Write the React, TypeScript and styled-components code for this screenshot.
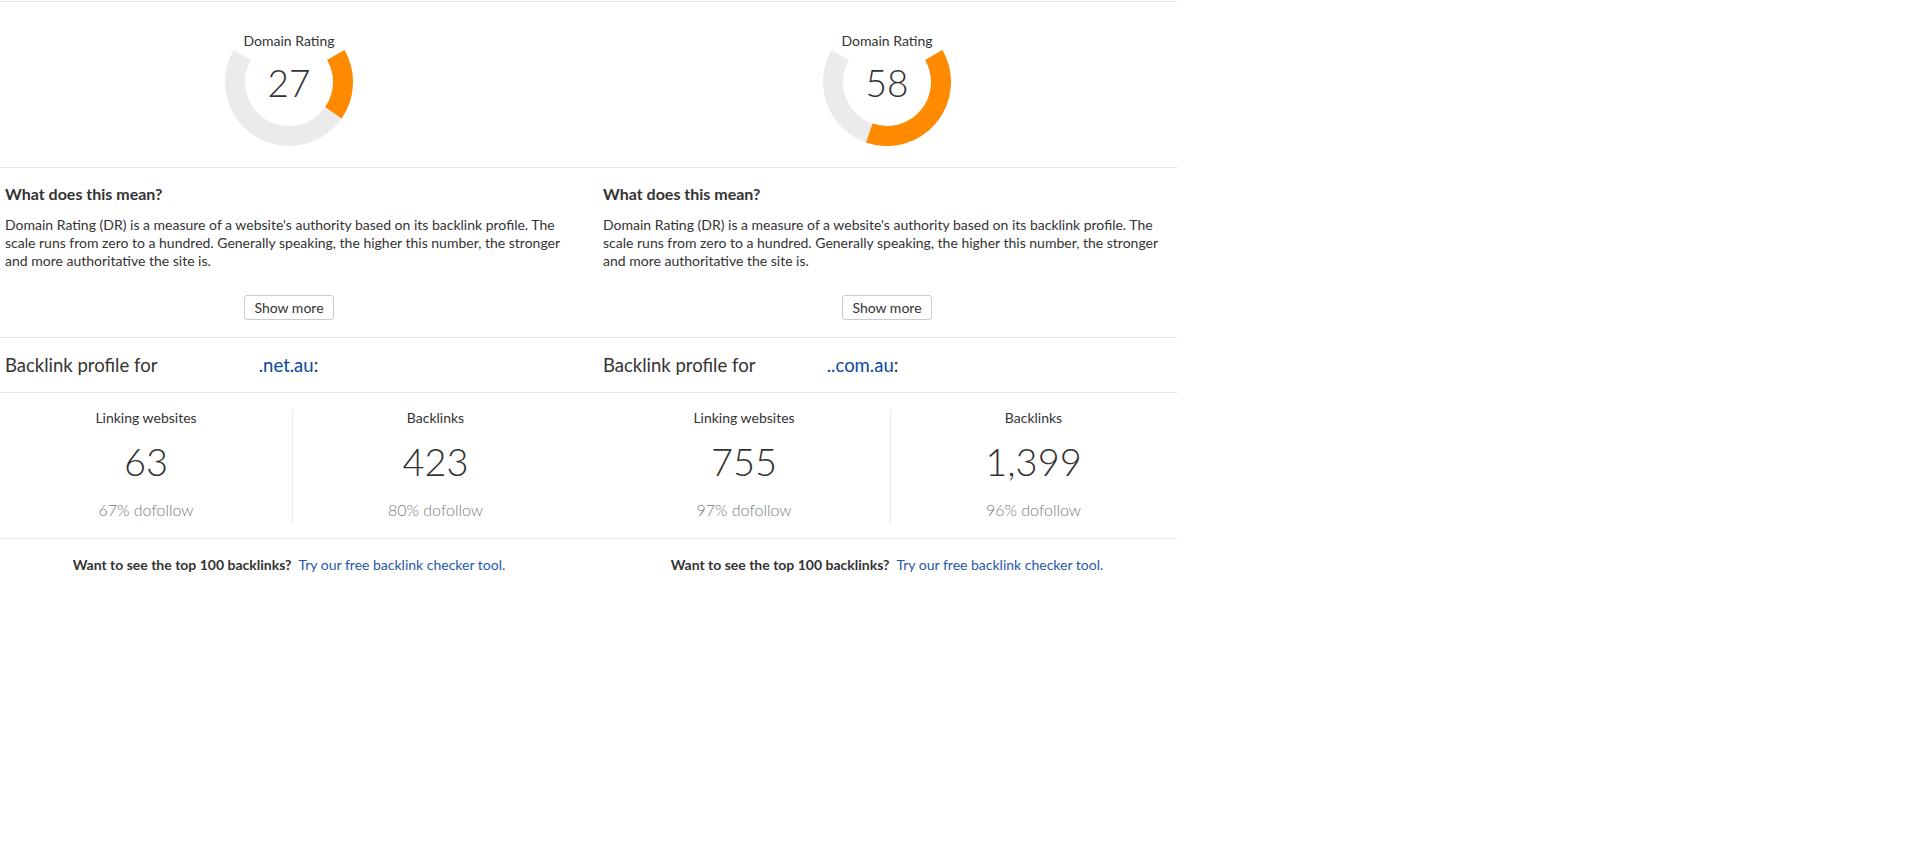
import React from 'react';
import styled, { createGlobalStyle } from 'styled-components';

const GlobalStyle = createGlobalStyle`
  body {
    margin: 0;
    background: #ffffff;
    font-family: Lato, "Open Sans", Arial, sans-serif;
    color: #333333;
  }
`;

const lineColor = '#e8e8e8';
const orange = '#ff8a00';
const track = '#ebebed';

const Page = styled.div`
  width: 1177px;
  border-top: 1px solid ${lineColor};
  margin-top: 1px;
`;

const Row = styled.div<{ $last?: boolean }>`
  display: grid;
  grid-template-columns: 578px 578px;
  column-gap: 20px;
  border-bottom: ${({ $last }) => ($last ? 'none' : `1px solid ${lineColor}`)};
`;

const GaugeCell = styled.div`
  display: flex;
  flex-direction: column;
  align-items: center;
  padding: 31px 0 21px;
`;

const GaugeLabel = styled.div`
  font-size: 14px;
  line-height: 16px;
  color: #333;
`;

const GaugeWrap = styled.div`
  position: relative;
  width: 128px;
  height: 128px;
  margin-top: -31px;
`;

const GaugeValue = styled.div`
  position: absolute;
  inset: 0;
  display: flex;
  align-items: center;
  justify-content: center;
  font-size: 37px;
  font-weight: 300;
  color: #333;
  padding-top: 1px;
`;

const ExplainCell = styled.div`
  display: flex;
  flex-direction: column;
  padding: 17px 5px 17px;
`;

const Heading = styled.div`
  font-size: 16px;
  line-height: 18px;
  font-weight: 700;
  color: #333;
`;

const Body = styled.p`
  margin: 13px 0 0;
  font-size: 14px;
  line-height: 18px;
  color: #333;
`;

const ShowMore = styled.button`
  align-self: center;
  margin-top: 25px;
  height: 25px;
  padding: 0 9px;
  background: #fff;
  border: 1px solid #cccccc;
  border-radius: 3px;
  font-family: Lato, Arial, sans-serif;
  font-size: 14px;
  color: #333;
  cursor: pointer;
`;

const ProfileCell = styled.div`
  padding: 16px 5px;
  font-size: 18.5px;
  line-height: 22px;
  color: #333;
`;

const Redacted = styled.span<{ $w: number }>`
  display: inline-block;
  width: ${({ $w }) => $w}px;
`;

const Domain = styled.span`
  color: #0b479e;
`;

const StatsCell = styled.div`
  display: grid;
  grid-template-columns: 292px 1fr;
  padding: 17px 0 15px;
`;

const Stat = styled.div<{ $divider?: boolean }>`
  display: flex;
  flex-direction: column;
  align-items: center;
  padding-bottom: 4px;
  border-left: ${({ $divider }) => ($divider ? `1px solid ${lineColor}` : 'none')};
`;

const StatLabel = styled.div`
  font-size: 14px;
  line-height: 16px;
  color: #333;
`;

const StatValue = styled.div`
  margin-top: 11px;
  font-size: 38px;
  line-height: 48px;
  font-weight: 300;
  color: #333;
`;

const StatNote = styled.div`
  margin-top: 16px;
  font-size: 16px;
  line-height: 18px;
  font-weight: 300;
  color: #7a7a7a;
`;

const CtaCell = styled.div`
  padding: 17px 0;
  text-align: center;
  font-size: 14px;
  line-height: 18px;
`;

const CtaQuestion = styled.span`
  font-weight: 700;
  color: #333;
`;

const CtaLink = styled.a`
  margin-left: 7px;
  color: #1f58a8;
  text-decoration: none;
`;

function polar(cx: number, cy: number, r: number, deg: number) {
  const a = (deg * Math.PI) / 180;
  return [cx + r * Math.sin(a), cy - r * Math.cos(a)];
}

function arc(from: number, to: number) {
  const r = 54;
  const [x1, y1] = polar(64, 64, r, from);
  const [x2, y2] = polar(64, 64, r, to);
  const large = to - from > 180 ? 1 : 0;
  return `M ${x1} ${y1} A ${r} ${r} 0 ${large} 1 ${x2} ${y2}`;
}

function Gauge({ value }: { value: number }) {
  const end = 60 + (240 * value) / 100;
  return (
    <GaugeWrap>
      <svg width="128" height="128" viewBox="0 0 128 128">
        <path d={arc(60, 300)} fill="none" stroke={track} strokeWidth="20" />
        <path d={arc(60, end)} fill="none" stroke={orange} strokeWidth="20" />
      </svg>
      <GaugeValue>{value}</GaugeValue>
    </GaugeWrap>
  );
}

const sites = [
  { rating: 27, gap: 97, domain: '.net.au', linking: '63', linkingDf: '67%', backlinks: '423', backlinksDf: '80%' },
  { rating: 58, gap: 67, domain: '..com.au', linking: '755', linkingDf: '97%', backlinks: '1,399', backlinksDf: '96%' },
];

export default function App() {
  return (
    <>
      <GlobalStyle />
      <Page>
        <Row>
          {sites.map((s, i) => (
            <GaugeCell key={i}>
              <GaugeLabel>Domain Rating</GaugeLabel>
              <Gauge value={s.rating} />
            </GaugeCell>
          ))}
        </Row>
        <Row>
          {sites.map((s, i) => (
            <ExplainCell key={i}>
              <Heading>What does this mean?</Heading>
              <Body>
                Domain Rating (DR) is a measure of a website's authority based on its backlink profile. The
                scale runs from zero to a hundred. Generally speaking, the higher this number, the stronger
                and more authoritative the site is.
              </Body>
              <ShowMore>Show more</ShowMore>
            </ExplainCell>
          ))}
        </Row>
        <Row>
          {sites.map((s, i) => (
            <ProfileCell key={i}>
              Backlink profile for <Redacted $w={s.gap} />
              <Domain>{s.domain}</Domain>:
            </ProfileCell>
          ))}
        </Row>
        <Row>
          {sites.map((s, i) => (
            <StatsCell key={i}>
              <Stat>
                <StatLabel>Linking websites</StatLabel>
                <StatValue>{s.linking}</StatValue>
                <StatNote>{s.linkingDf} dofollow</StatNote>
              </Stat>
              <Stat $divider>
                <StatLabel>Backlinks</StatLabel>
                <StatValue>{s.backlinks}</StatValue>
                <StatNote>{s.backlinksDf} dofollow</StatNote>
              </Stat>
            </StatsCell>
          ))}
        </Row>
        <Row $last>
          {sites.map((s, i) => (
            <CtaCell key={i}>
              <CtaQuestion>Want to see the top 100 backlinks?</CtaQuestion>
              <CtaLink href="#">Try our free backlink checker tool.</CtaLink>
            </CtaCell>
          ))}
        </Row>
      </Page>
    </>
  );
}
